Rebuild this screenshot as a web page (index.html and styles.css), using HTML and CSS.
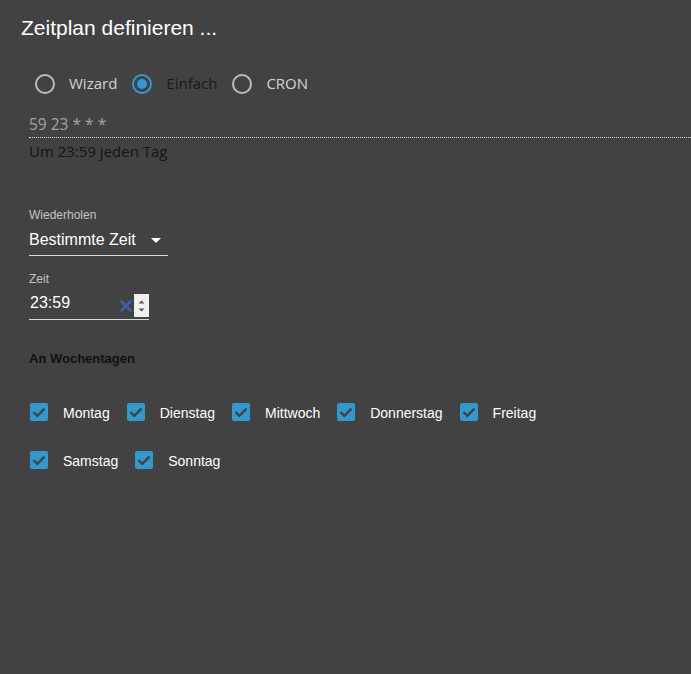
FILE: index.html
```html
<!DOCTYPE html>
<html lang="de">
<head>
<meta charset="utf-8">
<title>Zeitplan definieren</title>
<link rel="stylesheet" href="styles.css">
</head>
<body>
<div class="page">
  <h1 class="title">Zeitplan definieren ...</h1>

  <div class="mode-row">
    <label class="radio"><span class="radio-circle"></span><span class="radio-text">Wizard</span></label>
    <label class="radio radio-on"><span class="radio-circle"></span><span class="radio-text">Einfach</span></label>
    <label class="radio"><span class="radio-circle"></span><span class="radio-text">CRON</span></label>
  </div>

  <div class="cron-value">59 23 * * *</div>
  <div class="cron-desc">Um 23:59 jeden Tag</div>

  <div class="field field-repeat">
    <div class="field-label">Wiederholen</div>
    <div class="select">
      <span class="select-text">Bestimmte Zeit</span>
      <span class="select-arrow"></span>
    </div>
  </div>

  <div class="field field-time">
    <div class="field-label">Zeit</div>
    <div class="time-input">
      <span class="time-text">23:59</span>
      <span class="time-controls">
        <svg class="time-clear" width="12" height="12" viewBox="0 0 12 12"><path d="M1.5 1.5 L10.5 10.5 M10.5 1.5 L1.5 10.5" stroke="#3a5fa8" stroke-width="2.8" stroke-linecap="round"/></svg>
        <span class="spinner">
          <svg width="15" height="23" viewBox="0 0 15 23"><path d="M4.5 9.5 L7.5 6.5 L10.5 9.5 Z" fill="#555"/><path d="M4.5 14.5 L7.5 17.5 L10.5 14.5 Z" fill="#555"/></svg>
        </span>
      </span>
    </div>
  </div>

  <div class="days-title">An Wochentagen</div>

  <div class="days">
    <div class="day-row">
      <label class="day"><span class="check"><svg width="18" height="18" viewBox="0 0 18 18"><path d="M3.5 9 L7.3 12.8 L14.5 5.6" fill="none" stroke="#424242" stroke-width="2.4"/></svg></span><span class="day-text">Montag</span></label>
      <label class="day"><span class="check"><svg width="18" height="18" viewBox="0 0 18 18"><path d="M3.5 9 L7.3 12.8 L14.5 5.6" fill="none" stroke="#424242" stroke-width="2.4"/></svg></span><span class="day-text">Dienstag</span></label>
      <label class="day"><span class="check"><svg width="18" height="18" viewBox="0 0 18 18"><path d="M3.5 9 L7.3 12.8 L14.5 5.6" fill="none" stroke="#424242" stroke-width="2.4"/></svg></span><span class="day-text">Mittwoch</span></label>
      <label class="day"><span class="check"><svg width="18" height="18" viewBox="0 0 18 18"><path d="M3.5 9 L7.3 12.8 L14.5 5.6" fill="none" stroke="#424242" stroke-width="2.4"/></svg></span><span class="day-text">Donnerstag</span></label>
      <label class="day"><span class="check"><svg width="18" height="18" viewBox="0 0 18 18"><path d="M3.5 9 L7.3 12.8 L14.5 5.6" fill="none" stroke="#424242" stroke-width="2.4"/></svg></span><span class="day-text">Freitag</span></label>
    </div>
    <div class="day-row">
      <label class="day"><span class="check"><svg width="18" height="18" viewBox="0 0 18 18"><path d="M3.5 9 L7.3 12.8 L14.5 5.6" fill="none" stroke="#424242" stroke-width="2.4"/></svg></span><span class="day-text">Samstag</span></label>
      <label class="day"><span class="check"><svg width="18" height="18" viewBox="0 0 18 18"><path d="M3.5 9 L7.3 12.8 L14.5 5.6" fill="none" stroke="#424242" stroke-width="2.4"/></svg></span><span class="day-text">Sonntag</span></label>
    </div>
  </div>
</div>
</body>
</html>
```

FILE: styles.css
```css
html, body {
  margin: 0;
  padding: 0;
  background: #424242;
}

body {
  min-height: 100vh;
  font-family: "Liberation Sans", Arial, sans-serif;
  overflow: hidden;
}

.page {
  display: flex;
  flex-direction: column;
}

.title {
  margin: 0;
  padding: 16px 0 0 21px;
  font-family: "Liberation Sans", Arial, sans-serif;
  font-size: 21px;
  line-height: 24px;
  font-weight: normal;
  color: #ffffff;
}

.mode-row {
  display: flex;
  align-items: center;
  margin: 34px 0 0 35px;
  height: 20px;
}

.radio {
  display: flex;
  align-items: center;
  gap: 14px;
  margin-right: 15px;
}

.radio-circle {
  box-sizing: border-box;
  width: 20px;
  height: 20px;
  border: 2px solid #bdbdbd;
  border-radius: 50%;
  display: flex;
  align-items: center;
  justify-content: center;
}

.radio-on .radio-circle {
  border-color: #3399d6;
}

.radio-on .radio-circle::after {
  content: "";
  width: 10px;
  height: 10px;
  border-radius: 50%;
  background: #3399d6;
}

.radio-text {
  font-family: "Open Sans", "Noto Sans", sans-serif;
  font-size: 15px;
  line-height: 20px;
  color: #d2d4d6;
  position: relative;
  top: -1px;
}

.radio-on .radio-text {
  color: #1a1a1a;
}

.cron-value {
  margin: 20px 0 0 29px;
  font-family: "Open Sans", "Noto Sans", sans-serif;
  font-size: 15.5px;
  line-height: 20px;
  color: #a3a3a3;
  padding-bottom: 3px;
  border-bottom: 1px dotted #d8d8d8;
}

.cron-desc {
  margin: 3px 0 0 29px;
  font-family: "Open Sans", "Noto Sans", sans-serif;
  font-size: 15px;
  line-height: 20px;
  color: #141414;
}

.field {
  margin-left: 29px;
  display: flex;
  flex-direction: column;
}

.field-repeat {
  margin-top: 47px;
  width: 139px;
}

.field-label {
  font-size: 12px;
  line-height: 14px;
  color: #c4c4c4;
}

.select {
  display: flex;
  align-items: center;
  justify-content: space-between;
  padding: 9px 7px 6px 0;
  border-bottom: 1px solid #d6d6d6;
}

.select-text {
  font-size: 16px;
  line-height: 18px;
  color: #ffffff;
}

.select-arrow {
  width: 0;
  height: 0;
  border-left: 5px solid transparent;
  border-right: 5px solid transparent;
  border-top: 5px solid #ffffff;
  margin-top: 1px;
}

.field-time {
  margin-top: 16px;
  width: 120px;
}

.time-input {
  margin-top: 8px;
  height: 25px;
  display: flex;
  align-items: flex-start;
  justify-content: space-between;
  border-bottom: 1px solid #d6d6d6;
}

.time-text {
  font-size: 16px;
  line-height: 18px;
  color: #ffffff;
  padding: 0 0 0 1px;
}

.time-controls {
  display: flex;
  align-items: center;
  gap: 2px;
  height: 23px;
}

.time-clear {
  display: block;
}

.spinner {
  display: block;
  width: 15px;
  height: 23px;
  background: #f0f0f0;
}

.spinner svg {
  display: block;
}

.days-title {
  margin: 31px 0 0 29px;
  font-size: 13px;
  line-height: 15px;
  font-weight: bold;
  color: #111111;
}

.days {
  margin: 37px 0 0 30px;
  display: flex;
  flex-direction: column;
  gap: 30px;
}

.day-row {
  display: flex;
  align-items: center;
}

.day {
  display: flex;
  align-items: center;
  gap: 15px;
  margin-right: 17px;
}

.check {
  width: 18px;
  height: 18px;
  border-radius: 2px;
  background: #3399cc;
  display: block;
}

.check svg {
  display: block;
}

.day-text {
  font-size: 14px;
  line-height: 16px;
  color: #ffffff;
  padding-top: 2px;
}
```
